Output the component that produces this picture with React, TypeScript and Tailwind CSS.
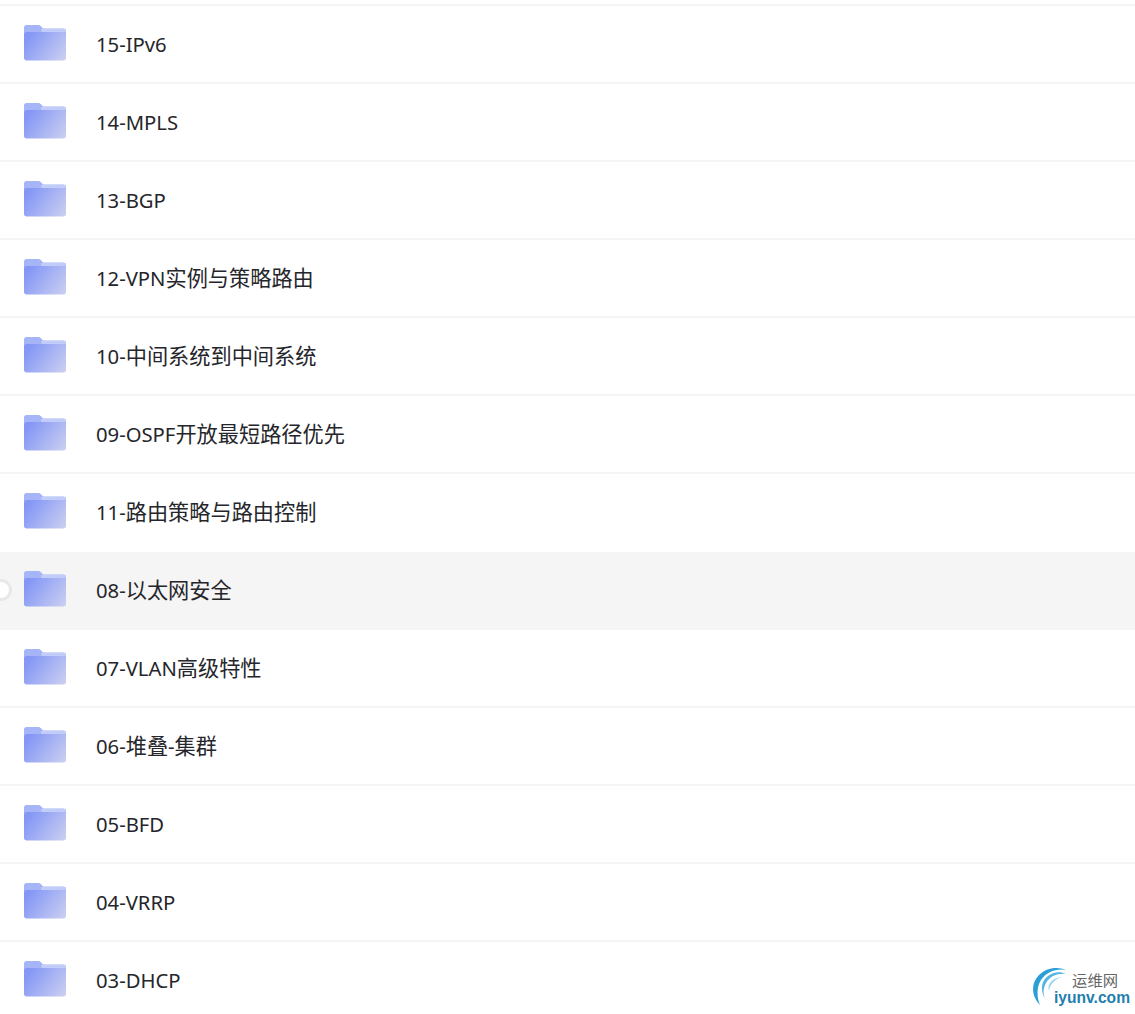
const names = ["15-IPv6","14-MPLS","13-BGP","12-VPN实例与策略路由","10-中间系统到中间系统","09-OSPF开放最短路径优先","11-路由策略与路由控制","08-以太网安全","07-VLAN高级特性","06-堆叠-集群","05-BFD","04-VRRP","03-DHCP"];

function FolderIcon({ id }: { id: number }) {
  return (
    <svg width="44" height="36" viewBox="0 0 44 36" className="mb-[2px] shrink-0">
      <defs>
        <linearGradient id={`f${id}`} x1="0" y1="0.35" x2="1" y2="0.85">
          <stop offset="0" stopColor="#8497f5" />
          <stop offset="1" stopColor="#c8cdf1" />
        </linearGradient>
      </defs>
      <path d="M1 2.5C1 1 2 0 3.5 0H15C16.5 0 17.5 .6 18.5 1.8L20 3.5H40.5C42 3.5 43 4.5 43 6V10H1Z" fill="#a6b5f7" />
      <path d="M1 9.5C1 8 2 7 3.5 7H40.5C42 7 43 8 43 9.5V33C43 34.5 42 35.5 40.5 35.5H3.5C2 35.5 1 34.5 1 33Z" fill={`url(#f${id})`} />
      <rect x="18" y="4" width="25" height="3" rx="1" fill="#c2ccf9" />
    </svg>
  );
}

function Label({ text }: { text: string }) {
  const parts = text.split(/([\u4e00-\u9fff]+)/).filter(Boolean);
  return (
    <span className="ml-[29px] leading-none">
      {parts.map((p, i) =>
        /[\u4e00-\u9fff]/.test(p) ? (
          <span key={i} className="text-[21.2px]">{p}</span>
        ) : (
          <span key={i} className="text-[20.25px]">{p}</span>
        ),
      )}
    </span>
  );
}

export default function App() {
  return (
    <div className="relative h-[1014px] w-[1135px] overflow-hidden bg-white font-['Noto_Sans','Noto_Sans_CJK_SC',sans-serif] text-[#25262b]">
      <div className="mt-1 flex flex-col border-t-2 border-[#f5f5f6]">
        {names.map((n, i) => (
          <div key={n} className={`relative flex h-[78px] shrink-0 items-center border-b-2 pl-[23px] ${i === 6 ? "border-transparent" : "border-[#f5f5f6]"} ${i === 7 ? "bg-[#f5f5f6]" : ""}`}>
            {i === 7 && <span className="absolute -left-[10px] top-[27px] h-[22px] w-[22px] rounded-full border-[3px] border-[#e8e8e8] bg-white" />}
            <FolderIcon id={i} />
            <Label text={n} />
          </div>
        ))}
      </div>
      <div className="absolute bottom-[6px] right-[5px] flex h-[42px] w-[98px]">
        <svg width="40" height="42" viewBox="0 0 40 42" className="-mr-[18px] shrink-0">
          <path d="M8 39C0 31 -2 18 7 9C14 2 25 0 34 4C25 2 14 6 9 14C4 22 5 32 8 39Z" fill="#2a9fd6" />
          <path d="M13 33C8 24 9 15 16 10C21 6 28 5 34 8C26 7 18 10 14 17C11 22 11 28 13 33Z" fill="#55b5e2" />
          <path d="M17 25C15 19 19 12 30 11C23 13 18 18 17 25Z" fill="#9ad5ef" />
        </svg>
        <div className="flex flex-1 flex-col items-end gap-[2px] pt-[7px]">
          <span className="pr-[12px] text-[15.3px] leading-none text-[#666]">运维网</span>
          <span className="font-['Liberation_Sans',sans-serif] text-[15.6px] font-bold leading-none text-[#1f7fae]">iyunv.com</span>
        </div>
      </div>
    </div>
  );
}
